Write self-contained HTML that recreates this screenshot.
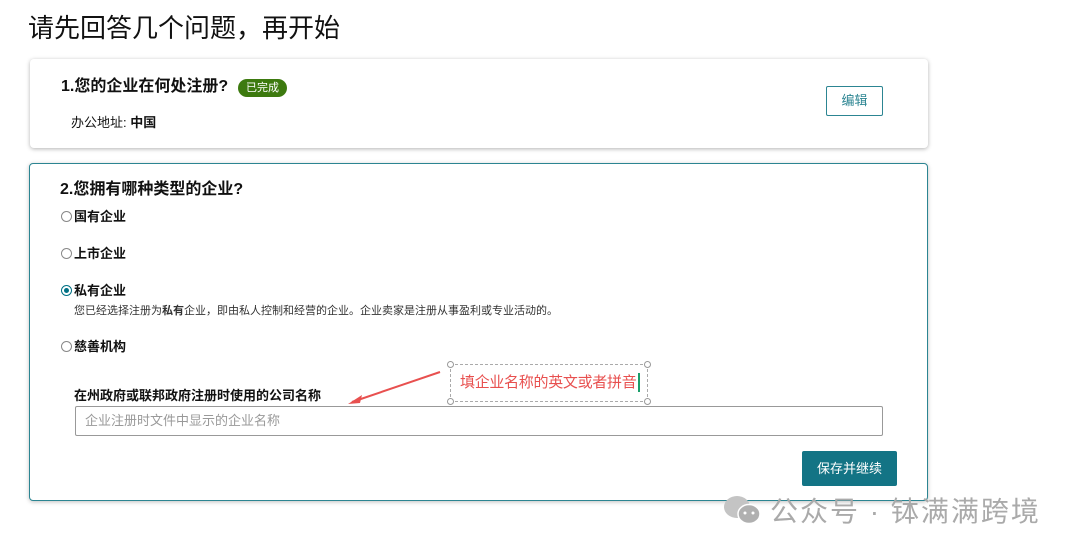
<!DOCTYPE html>
<html><head><meta charset="utf-8"><style>
*{box-sizing:border-box;margin:0;padding:0}
body{width:1080px;height:553px;background:#fff;font-family:"Liberation Sans","Noto Sans CJK SC",sans-serif;color:#111;position:relative;overflow:hidden}
.a{position:absolute;white-space:nowrap;line-height:1.2}
.card1{position:absolute;left:30px;top:59px;width:898px;height:89px;border-radius:4px;box-shadow:0 1px 4px rgba(0,0,0,.3);background:#fff}
.card2{position:absolute;left:29px;top:163px;width:899px;height:338px;border:1px solid #2c8592;border-radius:4px;box-shadow:0 1px 4px rgba(0,0,0,.25);background:#fff}
.b{font-weight:bold}
.radio{position:absolute;width:11px;height:11px;border:1px solid #888;border-radius:50%;background:#fff}
.radio.on{border-color:#007185}
.radio.on::after{content:"";position:absolute;left:2px;top:2px;width:5px;height:5px;border-radius:50%;background:#007185}
.h{position:absolute;width:7px;height:7px;border:1px solid #999;border-radius:50%;background:#fff}
</style></head><body>
<div class="a" style="left:28px;top:13px;font-size:26px;color:#111">请先回答几个问题，再开始</div>
<div class="card1"></div>
<div class="a b" style="left:61px;top:77px;font-size:16px">1.您的企业在何处注册?</div>
<div class="a" style="left:238px;top:79px;width:49px;height:18px;border-radius:9px;background:#3d7a0f;color:#fff;font-size:11px;text-align:center;line-height:18px">已完成</div>
<div class="a" style="left:71px;top:115px;font-size:13px">办公地址: <b>中国</b></div>
<div class="a" style="left:826px;top:86px;width:57px;height:30px;border:1px solid #2c8592;border-radius:2px;color:#2c8592;font-size:13px;text-align:center;line-height:28px">编辑</div>
<div class="card2"></div>
<div class="a b" style="left:60px;top:180px;font-size:16px">2.您拥有哪种类型的企业?</div>
<div class="radio" style="left:61px;top:211px"></div><div class="a b" style="left:74px;top:209px;font-size:13px">国有企业</div>
<div class="radio" style="left:61px;top:248px"></div><div class="a b" style="left:74px;top:246px;font-size:13px">上市企业</div>
<div class="radio on" style="left:61px;top:285px"></div><div class="a b" style="left:74px;top:283px;font-size:13px">私有企业</div>
<div class="a" style="left:74px;top:305px;font-size:11px;color:#333">您已经选择注册为<b>私有</b>企业，即由私人控制和经营的企业。企业卖家是注册从事盈利或专业活动的。</div>
<div class="radio" style="left:61px;top:341px"></div><div class="a b" style="left:74px;top:339px;font-size:13px">慈善机构</div>
<div class="a b" style="left:74px;top:388px;font-size:13px">在州政府或联邦政府注册时使用的公司名称</div>
<div class="a" style="left:75px;top:406px;width:808px;height:30px;border:1px solid #999;border-radius:2px;font-size:13px;color:#999;padding-left:9px;line-height:28px">企业注册时文件中显示的企业名称</div>
<div class="a" style="left:450px;top:364px;width:198px;height:38px;border:1px dashed #aaa"></div>
<div class="h" style="left:447px;top:361px"></div><div class="h" style="left:644px;top:361px"></div>
<div class="h" style="left:447px;top:398px"></div><div class="h" style="left:644px;top:398px"></div>
<div class="a" style="left:460px;top:374px;font-size:15px;color:#e8504f;letter-spacing:-0.3px">填企业名称的英文或者拼音</div>
<div class="a" style="left:638px;top:373px;width:2px;height:19px;background:#1a9e6a"></div>
<svg class="a" style="left:340px;top:368px" width="110" height="40"><line x1="100" y1="4" x2="12" y2="34" stroke="#e8504f" stroke-width="2"/><path d="M8 36 L22 27 L20 35 Z" fill="#e8504f"/></svg>
<div class="a" style="left:802px;top:451px;width:95px;height:35px;background:#137485;border-radius:2px;color:#fff;font-size:13px;text-align:center;line-height:35px">保存并继续</div>
<svg class="a" style="left:722px;top:494px" width="42" height="32"><ellipse cx="15" cy="13" rx="13" ry="11" fill="#c4c4c4"/><ellipse cx="27" cy="20" rx="11" ry="9.5" fill="#b0b0b0" stroke="#fff" stroke-width="1.5"/><circle cx="23" cy="19" r="1.5" fill="#fff"/><circle cx="31" cy="19" r="1.5" fill="#fff"/></svg>
<div class="a" style="left:770px;top:495px;font-size:28px;color:#aaa;letter-spacing:2px">公众号 · 钵满满跨境</div>
</body></html>
